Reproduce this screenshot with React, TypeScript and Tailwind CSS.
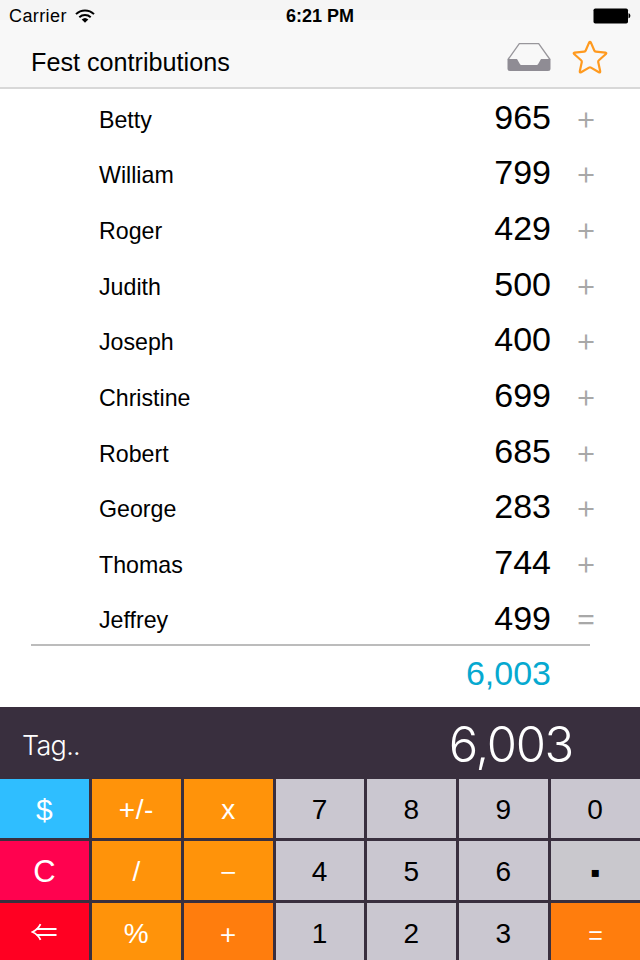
import { ReactNode } from "react";
import clsx from "clsx";

type Entry = {
  name: string;
  amount: number;
  operator: string;
};

type Key = {
  id: string;
  label: ReactNode;
  className: string;
};

const entries: Entry[] = [
  { name: "Betty", amount: 965, operator: "+" },
  { name: "William", amount: 799, operator: "+" },
  { name: "Roger", amount: 429, operator: "+" },
  { name: "Judith", amount: 500, operator: "+" },
  { name: "Joseph", amount: 400, operator: "+" },
  { name: "Christine", amount: 699, operator: "+" },
  { name: "Robert", amount: 685, operator: "+" },
  { name: "George", amount: 283, operator: "+" },
  { name: "Thomas", amount: 744, operator: "+" },
  { name: "Jeffrey", amount: 499, operator: "=" },
];

const digit = "bg-[#cac7d0] text-black text-[28px] pt-0.5 pr-px";
const operator = "bg-[#ff930a] text-white text-[28px] pt-[3px]";
const thinOperator =
  "bg-[#ff930a] text-white text-[27px] pt-0.5 font-[Inter,sans-serif] font-light";
const operatorStrong =
  "bg-[#ff7d0d] text-white text-[30px] font-[Inter,sans-serif] font-light";

const keys: Key[] = [
  { id: "currency", label: "$", className: "bg-[#2fbeff] text-white text-[30px] pt-[3px]" },
  { id: "sign", label: "+/-", className: clsx(operator, "tracking-[0.5px]") },
  { id: "multiply", label: "x", className: operator },
  { id: "7", label: "7", className: digit },
  { id: "8", label: "8", className: digit },
  { id: "9", label: "9", className: digit },
  { id: "0", label: "0", className: digit },
  { id: "clear", label: "C", className: "bg-[#ff024f] text-white text-[31px] pt-0.5" },
  { id: "divide", label: "/", className: operator },
  { id: "subtract", label: "–", className: thinOperator },
  { id: "4", label: "4", className: digit },
  { id: "5", label: "5", className: digit },
  { id: "6", label: "6", className: digit },
  { id: "point", label: "▪", className: "bg-[#c9c8cd] text-black text-[28px] pt-1" },
  { id: "back", label: <BackIcon />, className: "bg-[#ff0022] pr-px pb-0.5" },
  { id: "percent", label: "%", className: operator },
  { id: "add", label: "+", className: operatorStrong },
  { id: "1", label: "1", className: digit },
  { id: "2", label: "2", className: digit },
  { id: "3", label: "3", className: digit },
  { id: "equals", label: "=", className: operatorStrong },
];

function BackIcon() {
  return (
    <svg width="26" height="18" viewBox="0 0 26 18" fill="none" stroke="#fff">
      <path d="M9.500 1.200Q7 6.500 1.500 9 7 11.500 9.500 16.800" strokeWidth="1.800" />
      <path d="M5.500 6H25.500M5.500 12H25.500" strokeWidth="1.800" />
    </svg>
  );
}

function WifiIcon() {
  return (
    <svg width="20" height="14" viewBox="0 0 20 14" fill="none">
      <path d="M1 5.1a13 13 0 0 1 18 0" stroke="#000" strokeWidth="2" />
      <path d="M4.3 8.3a8.4 8.4 0 0 1 11.4 0" stroke="#000" strokeWidth="2" />
      <path d="M10 13.7 6.7 10.5a4.8 4.8 0 0 1 6.6 0z" fill="#000" />
    </svg>
  );
}

function BatteryIcon() {
  return (
    <svg width="38" height="16" viewBox="0 0 38 16">
      <rect x="0.5" y="0.5" width="34.5" height="15" rx="1.8" fill="#000" />
      <path d="M35.5 5.2c2.5.6 2.5 4.400 0 5z" fill="#000" />
    </svg>
  );
}

function TrayIcon() {
  return (
    <svg width="44" height="30" viewBox="0 0 44 30" fill="none">
      <path d="M1 17.500 12.3 1.600h19.400L43 17.500" stroke="#98969b" strokeWidth="1.300" />
      <path
        d="M.5 17h9.500l3 5.300q.4.700 1.200.700h15.600q.8 0 1.200-.7l3-5.300h9.500v9.500q0 2.500-2.500 2.500H3q-2.500 0-2.500-2.500z"
        fill="#8f8c94"
      />
    </svg>
  );
}

function StarIcon() {
  return (
    <svg width="36" height="34" viewBox="0 0 36 34" fill="none">
      <path
        d="M17.200 2.400Q18 1.200 18.800 2.400L22.300 10.500Q22.700 11.500 23.800 11.600L33.400 12.600Q34.900 12.900 33.900 14L26.900 20.200Q26 21 26.200 22.100L28.200 31.300Q28.300 32.800 26.900 32.300L19 27.600Q18 27 17 27.600L9.100 32.300Q7.700 32.800 7.800 31.300L9.800 22.100Q10 21 9.100 20.200L2.100 14Q1.100 12.900 2.600 12.600L12.200 11.600Q13.300 11.500 13.700 10.500Z"
        stroke="#ff9a1f"
        strokeWidth="2.200"
        strokeLinejoin="round"
      />
    </svg>
  );
}

function Header() {
  return (
    <header className="flex h-[89px] shrink-0 flex-col border-b-2 border-[#d8d8d8] bg-[linear-gradient(#f5f5f5_20px,#f8f8f8_20px)]">
      <div className="grid h-8 grid-cols-3 items-center px-[9px]">
        <div className="flex items-center gap-2 text-[18px] tracking-[0.4px]">
          Carrier
          <WifiIcon />
        </div>
        <span className="text-center text-[18px] font-bold">6:21 PM</span>
        <div className="flex justify-end">
          <BatteryIcon />
        </div>
      </div>
      <div className="flex flex-1 items-center pr-8 pb-[5px] pl-[31px]">
        <h1 className="flex-1 pt-3 text-[25.2px]">Fest contributions</h1>
        <TrayIcon />
        <span className="ml-[21px]">
          <StarIcon />
        </span>
      </div>
    </header>
  );
}

function EntryRow({ entry }: { entry: Entry }) {
  return (
    <li className="flex h-[55.65px] items-center pl-[99px]">
      <span className="flex-1 pt-[3px] text-[23.2px]">{entry.name}</span>
      <span className="pb-1 text-[34px]">{entry.amount}</span>
      <span
        className={clsx(
          "ml-[21px] w-[28px] text-center font-[Inter,sans-serif] font-light text-[#a8a8a8]",
          entry.operator === "=" ? "pb-[5px] text-[36px]" : "pb-[3px] text-[33px]"
        )}
      >
        {entry.operator}
      </span>
      <span className="w-10" />
    </li>
  );
}

export default function App() {
  const total = entries
    .reduce((sum, entry) => sum + entry.amount, 0)
    .toLocaleString("en-US");

  return (
    <div className="flex h-[960px] w-[640px] flex-col overflow-hidden bg-white font-['Liberation_Sans',Arial,sans-serif] leading-none text-black">
      <Header />

      <main className="h-[618px] shrink-0">
        <ul className="h-[555px] pt-0.5">
          {entries.map((entry) => (
            <EntryRow key={entry.name} entry={entry} />
          ))}
        </ul>
        <div className="mr-[50px] ml-[31px] h-[2px] bg-[#bcbcbc]" />
        <p className="pt-2.5 pr-[89px] text-right text-[34px] text-[#06a9d0]">
          {total}
        </p>
      </main>

      <section className="flex h-[72px] shrink-0 items-center justify-between bg-[#392f3e] pr-[67px] pl-[22px] font-[Inter,sans-serif] font-light text-white">
        <span className="pt-1 text-[27px] tracking-[-0.7px]">Tag..</span>
        <span className="pt-0.5 text-[49px] tracking-[-1.3px]">{total}</span>
      </section>

      <div className="grid shrink-0 grid-cols-7 gap-[3px] bg-[#392f3e]">
        {keys.map((key) => (
          <button
            key={key.id}
            className={clsx("flex h-[59px] items-center justify-center", key.className)}
          >
            {key.label}
          </button>
        ))}
      </div>
    </div>
  );
}
